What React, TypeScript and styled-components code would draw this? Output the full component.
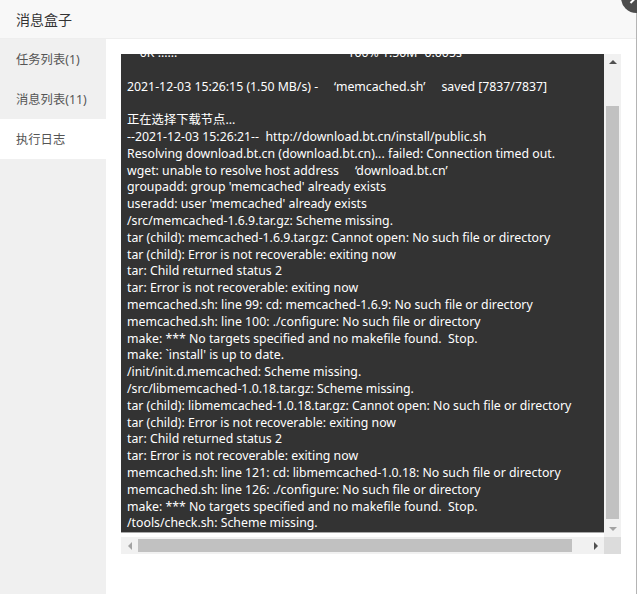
import React from "react"
import styled, { createGlobalStyle } from "styled-components"

const GlobalStyle = createGlobalStyle`
  html, body {
    margin: 0;
    padding: 0;
    background: #fff;
    overflow: hidden;
  }
  body {
    font-family: "Noto Sans", "Noto Sans CJK SC", sans-serif;
  }
`

const logLines: string[] = [
  "    0K ......",
  "",
  "2021-12-03 15:26:15 (1.50 MB/s) -     \u2018memcached.sh\u2019     saved [7837/7837]",
  "",
  "正在选择下载节点...",
  "--2021-12-03 15:26:21--  http://download.bt.cn/install/public.sh",
  "Resolving download.bt.cn (download.bt.cn)... failed: Connection timed out.",
  "wget: unable to resolve host address     \u2018download.bt.cn\u2019",
  "groupadd: group 'memcached' already exists",
  "useradd: user 'memcached' already exists",
  "/src/memcached-1.6.9.tar.gz: Scheme missing.",
  "tar (child): memcached-1.6.9.tar.gz: Cannot open: No such file or directory",
  "tar (child): Error is not recoverable: exiting now",
  "tar: Child returned status 2",
  "tar: Error is not recoverable: exiting now",
  "memcached.sh: line 99: cd: memcached-1.6.9: No such file or directory",
  "memcached.sh: line 100: ./configure: No such file or directory",
  "make: *** No targets specified and no makefile found.  Stop.",
  "make: `install' is up to date.",
  "/init/init.d.memcached: Scheme missing.",
  "/src/libmemcached-1.0.18.tar.gz: Scheme missing.",
  "tar (child): libmemcached-1.0.18.tar.gz: Cannot open: No such file or directory",
  "tar (child): Error is not recoverable: exiting now",
  "tar: Child returned status 2",
  "tar: Error is not recoverable: exiting now",
  "memcached.sh: line 121: cd: libmemcached-1.0.18: No such file or directory",
  "memcached.sh: line 126: ./configure: No such file or directory",
  "make: *** No targets specified and no makefile found.  Stop.",
  "/tools/check.sh: Scheme missing.",
]

const tabs = ["任务列表(1)", "消息列表(11)", "执行日志"]

const Dialog = styled.div`
  position: relative;
  width: 636px;
  height: 594px;
  border-right: 1px solid #b4b4b4;
  display: flex;
  flex-direction: column;
  background: #fff;
`

const Header = styled.div`
  height: 38px;
  flex-shrink: 0;
  background: #f8f8f8;
  border-bottom: 1px solid #eee;
  padding-left: 16px;
  display: flex;
  align-items: center;
  font-size: 14px;
  color: #333;
`

const CloseButton = styled.div`
  position: absolute;
  left: 621px;
  top: -18px;
  width: 31px;
  height: 31px;
  border-radius: 50%;
  background: #4d4d4d;
  overflow: hidden;

  &::before,
  &::after {
    content: "";
    position: absolute;
    left: 7px;
    top: 14px;
    width: 17px;
    height: 2px;
    background: #fff;
  }
  &::before {
    transform: rotate(45deg);
  }
  &::after {
    transform: rotate(-45deg);
  }
`

const Body = styled.div`
  flex: 1;
  display: flex;
  min-height: 0;
`

const Sidebar = styled.ul`
  width: 106px;
  flex-shrink: 0;
  margin: 0;
  padding: 0;
  list-style: none;
  background: #f0f0f0;
`

const Tab = styled.li<{ $active?: boolean }>`
  height: 40px;
  line-height: 42px;
  padding-left: 16px;
  font-size: 12.3px;
  color: #555;
  background: ${(p) => (p.$active ? "#fff" : "transparent")};
`

const Main = styled.div`
  flex: 1;
  padding: 15px;
`

const ScrollBox = styled.div`
  width: 500px;
  height: 500px;
  display: grid;
  grid-template-columns: 483px 17px;
  grid-template-rows: 483px 17px;
`

const Viewport = styled.div`
  overflow: hidden;
  background: #fff;
`

const LogPane = styled.div`
  background: #333;
  border-bottom: 1px solid #a8a8a8;
  overflow: hidden;
  height: 478px;
`

const LogText = styled.pre`
  margin: -9px 0 0;
  padding: 0 6px;
  font-family: "Noto Sans", "Noto Sans CJK SC", sans-serif;
  font-size: 12.3px;
  line-height: 16.8px;
  color: #fff;
  white-space: pre;
`

const Gap = styled.span`
  display: inline-block;
  width: 170px;
`

const VTrack = styled.div`
  background: #f1f1f1;
  display: flex;
  flex-direction: column;
`

const HTrack = styled.div`
  background: #f1f1f1;
  display: flex;
`

const Corner = styled.div`
  background: #dcdcdc;
`

const ArrowCell = styled.div`
  width: 17px;
  height: 17px;
  flex-shrink: 0;
  display: flex;
  align-items: center;
  justify-content: center;
`

const Arrow = styled.span<{ $dir: "up" | "down" | "left" | "right"; $dim?: boolean }>`
  width: 0;
  height: 0;
  border: 4px solid transparent;
  ${(p) => {
    const c = p.$dim ? "#a3a3a3" : "#505050"
    switch (p.$dir) {
      case "up":
        return `border-bottom-color: ${c}; border-top-width: 0; margin-top: -2px;`
      case "down":
        return `border-top-color: ${c}; border-bottom-width: 0;`
      case "left":
        return `border-right-color: ${c}; border-left-width: 0;`
      default:
        return `border-left-color: ${c}; border-right-width: 0;`
    }
  }}
`

const VThumb = styled.div`
  margin: 35px 2px 0;
  height: 413px;
  background: #c1c1c1;
`

const HThumb = styled.div`
  margin: 2px 0 2px 0;
  width: 434px;
  background: #c1c1c1;
`

const Spacer = styled.div`
  flex: 1;
`

export default function App() {
  return (
    <>
      <GlobalStyle />
      <Dialog>
        <Header>消息盒子</Header>
        <CloseButton />
        <Body>
          <Sidebar>
            {tabs.map((t, i) => (
              <Tab key={t} $active={i === 2}>
                {t}
              </Tab>
            ))}
          </Sidebar>
          <Main>
            <ScrollBox>
              <Viewport>
                <LogPane>
                  <LogText>
                    {logLines.map((line, i) =>
                      i === 0 ? (
                        <div key={i}>
                          {line}
                          <Gap />
                          100% 1.50M=0.005s
                        </div>
                      ) : (
                        <div key={i}>{line || " "}</div>
                      )
                    )}
                  </LogText>
                </LogPane>
              </Viewport>
              <VTrack>
                <ArrowCell>
                  <Arrow $dir="up" />
                </ArrowCell>
                <VThumb />
                <Spacer />
                <ArrowCell>
                  <Arrow $dir="down" $dim />
                </ArrowCell>
              </VTrack>
              <HTrack>
                <ArrowCell>
                  <Arrow $dir="left" $dim />
                </ArrowCell>
                <HThumb />
                <Spacer />
                <ArrowCell>
                  <Arrow $dir="right" />
                </ArrowCell>
              </HTrack>
              <Corner />
            </ScrollBox>
          </Main>
        </Body>
      </Dialog>
    </>
  )
}
